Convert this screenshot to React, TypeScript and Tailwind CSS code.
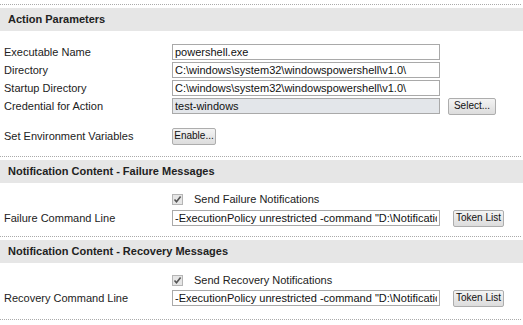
import React from "react";

const Btn = ({ children, className = "" }: { children: React.ReactNode; className?: string }) => (
  <button
    className={
      "h-[17px] px-[1px] rounded-[2px] border border-[#adadad] bg-gradient-to-b from-[#f4f4f4] to-[#dcdcdc] font-[family-name:'Liberation_Sans',Arial,sans-serif] text-[10px] leading-none text-[#111] whitespace-nowrap flex items-center justify-center " +
      className
    }
  >
    {children}
  </button>
);

const Field = ({ value, gray = false }: { value: string; gray?: boolean }) => (
  <input
    readOnly
    value={value}
    className={
      "w-[268px] h-[16px] border border-[#a9a9a9] px-[2px] outline-none leading-[14px] text-[11px] text-[#111] font-[family-name:'Liberation_Sans',Arial,sans-serif] " +
      (gray ? "bg-[#e3e6ea]" : "bg-white")
    }
  />
);

const Header = ({ title }: { title: string }) => (
  <div>
    <div className="border-t border-dotted border-[#aaa] w-[521px]" />
    <div className="mt-[3px] h-[23px] bg-[#e6e6e6] flex items-center pl-[8px] font-bold text-[11px] text-[#222]">
      {title}
    </div>
  </div>
);

const Row = ({ label, children }: { label: string; children: React.ReactNode }) => (
  <div className="flex items-center h-[16px]">
    <div className="w-[172px] pl-[4px] text-[11px] text-[#222] whitespace-nowrap">{label}</div>
    {children}
  </div>
);

const Check = ({ label }: { label: string }) => (
  <div className="flex items-center h-[12px] pl-[172px]">
    <div className="w-[11px] h-[11px] border border-[#b5b5b5] bg-[#e6e6e6] flex items-center justify-center">
      <svg width="9" height="9" viewBox="0 0 9 9">
        <path d="M1.5 4.5 L3.5 6.8 L7.6 1.6" stroke="#555" strokeWidth="1.6" fill="none" />
      </svg>
    </div>
    <span className="ml-[11px] text-[11px] text-[#222]">{label}</span>
  </div>
);

const cmd = '-ExecutionPolicy unrestricted -command "D:\\Notifications\\Send-Notification.ps1"';

export default function App() {
  return (
    <div className="w-[523px] h-[325px] bg-white pt-[4px] font-[family-name:'Liberation_Sans',Arial,sans-serif] text-[11px] overflow-hidden">
      <Header title="Action Parameters" />
      <div className="mt-[13px] flex flex-col gap-[2px]">
        <Row label="Executable Name">
          <Field value="powershell.exe" />
        </Row>
        <Row label="Directory">
          <Field value={"C:\\windows\\system32\\windowspowershell\\v1.0\\"} />
        </Row>
        <Row label="Startup Directory">
          <Field value={"C:\\windows\\system32\\windowspowershell\\v1.0\\"} />
        </Row>
        <Row label="Credential for Action">
          <Field value="test-windows" gray />
          <Btn className="ml-[8px] w-[48px]">Select...</Btn>
        </Row>
      </div>
      <div className="mt-[14px]">
        <Row label="Set Environment Variables">
          <Btn className="w-[44px]">Enable...</Btn>
        </Row>
      </div>
      <div className="mt-[12px]">
        <Header title="Notification Content - Failure Messages" />
      </div>
      <div className="mt-[10px]">
        <Check label="Send Failure Notifications" />
        <div className="mt-[5px]">
          <Row label="Failure Command Line">
            <Field value={cmd} />
            <Btn className="ml-[13px] w-[51px]">Token List</Btn>
          </Row>
        </div>
      </div>
      <div className="mt-[10px]">
        <Header title="Notification Content - Recovery Messages" />
      </div>
      <div className="mt-[11px]">
        <Check label="Send Recovery Notifications" />
        <div className="mt-[4px]">
          <Row label="Recovery Command Line">
            <Field value={cmd} />
            <Btn className="ml-[13px] w-[51px]">Token List</Btn>
          </Row>
        </div>
      </div>
      <div className="mt-[13px] border-t border-dotted border-[#aaa] w-[521px]" />
    </div>
  );
}
